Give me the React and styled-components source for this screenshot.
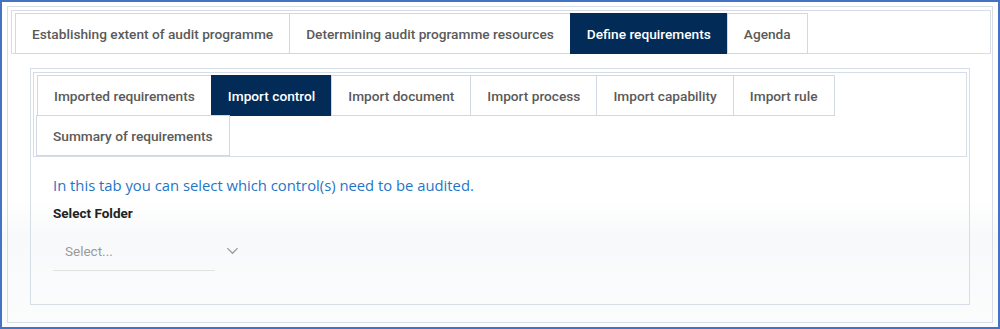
import React from 'react';
import styled, { createGlobalStyle } from 'styled-components';

const GlobalStyle = createGlobalStyle`
  html, body {
    margin: 0;
    padding: 0;
    background: #fff;
  }
  * {
    box-sizing: border-box;
  }
`;

const Frame = styled.div`
  width: 1000px;
  height: 329px;
  border: 2px solid #4472c4;
  padding: 4px 5px;
  background: linear-gradient(to bottom, #fff 0, #fff 195px, #f8f9fa 235px, #fbfcfc 329px);
  font-family: Roboto, "Liberation Sans", Arial, sans-serif;
`;

const Card = styled.div`
  height: 100%;
  border: 1px solid #d6dde6;
  padding: 3px 1px 17px 3px;
  display: flex;
  flex-direction: column;
`;

const TabBar = styled.div`
  display: flex;
  flex-wrap: wrap;
  border: 1px solid #d6dde6;
  padding: ${(p) => (p.inner ? '2px 3px 1px 3px' : '2px 3px 0 3px')};
  background: #fff;
`;

const Tab = styled.div`
  height: 41px;
  padding: 0 16px;
  display: flex;
  align-items: center;
  font-size: 13.7px;
  font-weight: 500;
  color: ${(p) => (p.active ? '#fff' : '#5a5a5a')};
  background: ${(p) => (p.active ? '#022c57' : '#fff')};
  border: 1px solid ${(p) => (p.active ? '#022c57' : '#d0d9e3')};
  margin-left: -1px;
  margin-bottom: -1px;
  white-space: nowrap;
  &:first-child {
    margin-left: 0;
  }
`;

const Body = styled.div`
  flex: 1;
  padding: 14px 21px 0 19px;
  display: flex;
  flex-direction: column;
`;

const Panel = styled.div`
  flex: 1;
  border: 1px solid #d6dde6;
  padding: 3px 2px;
`;

const PanelContent = styled.div`
  padding: 18px 20px 0 20px;
`;

const Hint = styled.p`
  margin: 0;
  font-family: "Open Sans", "Noto Sans", sans-serif;
  font-size: 14.8px;
  line-height: 20px;
  color: #1f76c6;
`;

const Label = styled.div`
  margin-top: 10px;
  font-size: 13.5px;
  font-weight: 700;
  color: #222;
  line-height: 16px;
`;

const SelectRow = styled.div`
  display: flex;
  align-items: center;
  margin-top: 10px;
`;

const SelectBox = styled.div`
  width: 162px;
  height: 40px;
  display: flex;
  align-items: center;
  padding-left: 12px;
  border-bottom: 1px solid #e2e2e2;
  font-size: 13.5px;
  color: #9a9a9a;
`;

const Chevron = styled.svg`
  margin-left: 10px;
  margin-top: -2px;
  width: 15px;
  height: 15px;
`;

const topTabs = [
  'Establishing extent of audit programme',
  'Determining audit programme resources',
  'Define requirements',
  'Agenda',
];

const innerTabs = [
  'Imported requirements',
  'Import control',
  'Import document',
  'Import process',
  'Import capability',
  'Import rule',
  'Summary of requirements',
];

export default function App() {
  return (
    <>
      <GlobalStyle />
      <Frame>
        <Card>
          <TabBar>
            {topTabs.map((t) => (
              <Tab key={t} active={t === 'Define requirements'}>
                {t}
              </Tab>
            ))}
          </TabBar>
          <Body>
            <Panel>
              <TabBar inner>
                {innerTabs.map((t) => (
                  <Tab key={t} active={t === 'Import control'}>
                    {t}
                  </Tab>
                ))}
              </TabBar>
              <PanelContent>
                <Hint>In this tab you can select which control(s) need to be audited.</Hint>
                <Label>Select Folder</Label>
                <SelectRow>
                  <SelectBox>Select...</SelectBox>
                  <Chevron viewBox="0 0 16 16" fill="none" stroke="#9b9b9b" strokeWidth="1.4">
                    <path d="M2.5 5.5 L8 11 L13.5 5.5" />
                  </Chevron>
                </SelectRow>
              </PanelContent>
            </Panel>
          </Body>
        </Card>
      </Frame>
    </>
  );
}
